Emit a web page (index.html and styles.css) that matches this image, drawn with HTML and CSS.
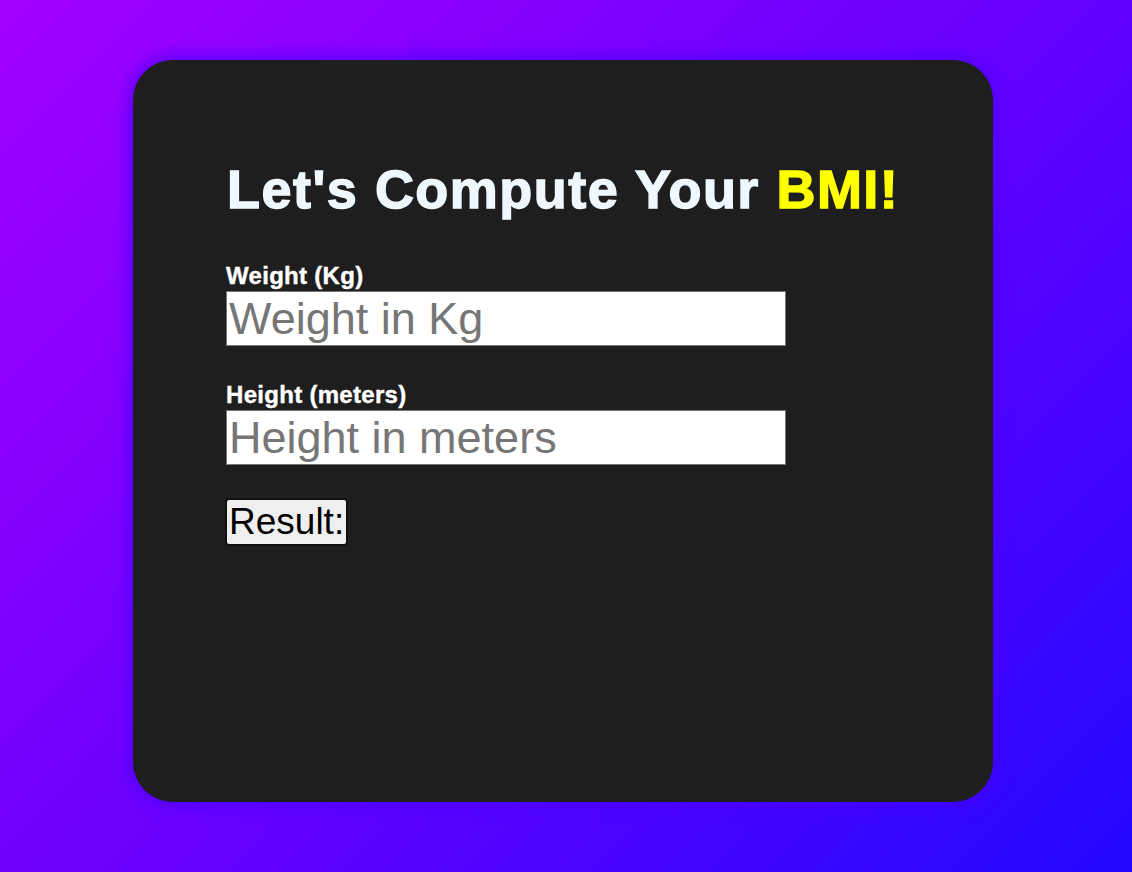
FILE: index.html
```html
<!DOCTYPE html>
<html lang="en">
<head>
<meta charset="utf-8">
<title>BMI Calculator</title>
<link rel="stylesheet" href="styles.css">
</head>
<body>
  <main class="card">
    <h1 class="title">Let's Compute Your <span class="accent">BMI!</span></h1>
    <form class="form">
      <div class="field">
        <label class="label" for="weight">Weight (Kg)</label>
        <input class="input" id="weight" type="text" placeholder="Weight in Kg">
      </div>
      <div class="field">
        <label class="label" for="height">Height (meters)</label>
        <input class="input" id="height" type="text" placeholder="Height in meters">
      </div>
      <div class="actions">
        <button class="button" type="button">Result:</button>
      </div>
    </form>
  </main>
</body>
</html>
```

FILE: styles.css
```css
html, body {
  margin: 0;
  padding: 0;
  height: 100%;
}

body {
  background: linear-gradient(135deg, #a300ff 0%, #6a00ff 50%, #2208ff 100%);
  font-family: "Liberation Sans", Arial, sans-serif;
  overflow: hidden;
}

.card {
  box-sizing: border-box;
  width: 860px;
  height: 742px;
  margin: 60px 0 0 133px;
  padding: 98px 0 0 94px;
  background: #1e1e1e;
  border-radius: 40px;
  box-shadow: 0 0 18px 2px #4a00ff;
}

.title {
  margin: 0;
  font-size: 54px;
  font-weight: 700;
  line-height: normal;
  color: #f0f8ff;
  -webkit-text-stroke: 1.4px currentColor;
  letter-spacing: 1.5px;
}

.accent {
  color: #ffff00;
}

.form {
  display: flex;
  flex-direction: column;
  margin-top: 42px;
}

.field {
  display: flex;
  flex-direction: column;
  align-items: flex-start;
  margin-bottom: 35px;
}

.label {
  color: #ffffff;
  font-weight: 700;
  font-size: 24px;
  line-height: normal;
  letter-spacing: 0.3px;
  -webkit-text-stroke: 0.4px currentColor;
  margin: 0 0 1px -1px;
}

.input {
  box-sizing: border-box;
  width: 560px;
  height: 55px;
  margin-left: -1px;
  padding: 1px 2px;
  border: 1px solid #767676;
  background: #ffffff;
  font-family: "Liberation Sans", Arial, sans-serif;
  font-size: 45px;
  color: #000;
  outline: none;
}

.input::placeholder {
  color: #767676;
}

.actions {
  display: flex;
  align-items: flex-start;
}

.button {
  box-sizing: border-box;
  font-family: "Liberation Sans", Arial, sans-serif;
  font-size: 37px;
  line-height: normal;
  margin: -2px 0 0 -2px;
  padding: 0 2px;
  color: #000;
  background: #efefef;
  border: 2px solid #111;
  border-radius: 4px;
  height: 48px;
}
```
